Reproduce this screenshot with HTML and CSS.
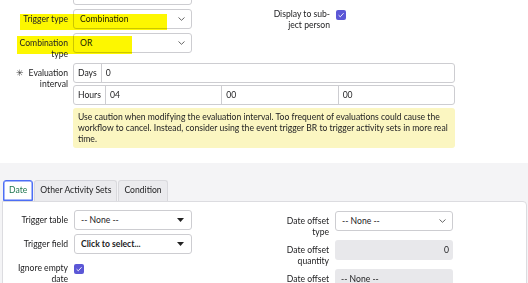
FILE: index.html
```html
<!DOCTYPE html>
<html lang="en">
<head>
  <meta charset="UTF-8">
  <title>Activity set trigger</title>
  <link rel="stylesheet" href="styles.css">
</head>
<body>
  <div class="top">
    <div class="cols">
      <div class="col">
        <div class="field">
          <span class="label"></span>
          <div class="input"></div>
        </div>
        <div class="field">
          <span class="mark mark-trigger"></span>
          <span class="label">Trigger type</span>
          <div class="select">Combination<svg class="chev" width="7" height="4" viewBox="0 0 7 4"><path d="M0.5 0.5 L3.5 3.3 L6.5 0.5" fill="none" stroke="#555" stroke-width="0.9"/></svg></div>
        </div>
        <div class="field">
          <span class="mark mark-combo"></span>
          <span class="label">Combination<br>type</span>
          <div class="select">OR<svg class="chev" width="7" height="4" viewBox="0 0 7 4"><path d="M0.5 0.5 L3.5 3.3 L6.5 0.5" fill="none" stroke="#555" stroke-width="0.9"/></svg></div>
        </div>
      </div>
      <div class="col col-right">
        <div class="field check-row">
          <span class="label">Display to sub-<br>ject person</span>
          <span class="checkbox"><svg width="10" height="10" viewBox="0 0 10 10"><path d="M2.6 5.2 L4.3 6.8 L7.6 3.2" fill="none" stroke="#fff" stroke-width="0.9"/></svg></span>
        </div>
      </div>
    </div>

    <div class="field wide">
      <span class="label"><span class="req">✳</span> Evaluation<br>interval</span>
      <div class="interval">
        <div class="group">
          <span class="addon">Days</span>
          <span class="cell">0</span>
        </div>
        <div class="group">
          <span class="addon">Hours</span>
          <span class="cell">04</span>
          <span class="cell">00</span>
          <span class="cell">00</span>
        </div>
        <div class="note">Use caution when modifying the evaluation interval. Too frequent of evaluations could cause the workflow to cancel. Instead, consider using the event trigger BR to trigger activity sets in more real time.</div>
      </div>
    </div>
  </div>

  <div class="band">
    <div class="tabs">
      <span class="tab active">Date</span>
      <span class="tab">Other Activity Sets</span>
      <span class="tab">Condition</span>
    </div>
    <div class="panel">
      <div class="cols">
        <div class="col">
          <div class="field">
            <span class="label">Trigger table</span>
            <div class="select">-- None --<svg class="tri" width="7" height="4" viewBox="0 0 7 4"><path d="M0 0 H7 L3.5 4 Z" fill="#222"/></svg></div>
          </div>
          <div class="field">
            <span class="label">Trigger field</span>
            <div class="select bold">Click to select...<svg class="tri" width="7" height="4" viewBox="0 0 7 4"><path d="M0 0 H7 L3.5 4 Z" fill="#222"/></svg></div>
          </div>
          <div class="field check-row">
            <span class="label">Ignore empty<br>date</span>
            <span class="checkbox"><svg width="10" height="10" viewBox="0 0 10 10"><path d="M2.6 5.2 L4.3 6.8 L7.6 3.2" fill="none" stroke="#fff" stroke-width="0.9"/></svg></span>
          </div>
        </div>
        <div class="col">
          <div class="field">
            <span class="label">Date offset<br>type</span>
            <div class="select">-- None --<svg class="chev" width="7" height="4" viewBox="0 0 7 4"><path d="M0.5 0.5 L3.5 3.3 L6.5 0.5" fill="none" stroke="#555" stroke-width="0.9"/></svg></div>
          </div>
          <div class="field">
            <span class="label">Date offset<br>quantity</span>
            <div class="readonly num">0</div>
          </div>
          <div class="field">
            <span class="label">Date offset</span>
            <div class="readonly">-- None --</div>
          </div>
        </div>
      </div>
    </div>
  </div>
</body>
</html>
```

FILE: styles.css
```css
body {
  margin: 0;
  font-family: "Lato", "Liberation Sans", sans-serif;
  font-size: 8.6px;
  line-height: 11px;
  color: #222224;
  background: #fff;
  overflow: hidden;
}

.top {
  margin-top: -15px;
  padding-bottom: 15px;
}

.cols {
  display: grid;
  grid-template-columns: 262px 1fr;
}

.col {
  display: flex;
  flex-direction: column;
  gap: 4px;
}

.col-right {
  padding-top: 19px;
}

.field {
  position: relative;
  display: grid;
  grid-template-columns: 68px 119px;
  column-gap: 5px;
  align-items: start;
}

.col-right .field,
.panel .col + .col .field {
  column-gap: 6px;
}

.label {
  position: relative;
  text-align: right;
  padding-top: 5px;
  min-height: 15px;
}

.check-row {
  padding-top: 5px;
}

.check-row .label {
  padding-top: 0;
}

/* marker highlight drawn over the form */
.mark {
  position: absolute;
  background: #fdf700;
  mix-blend-mode: multiply;
}
.mark-trigger {
  left: 20px;
  top: 5px;
  width: 147px;
  height: 16px;
}
.mark-combo {
  left: 17px;
  top: 3px;
  width: 115px;
  height: 18px;
}

.input,
.select {
  height: 20px;
  box-sizing: border-box;
  border: 1px solid #cdcdd1;
  border-radius: 3px;
  background: #fff;
}

.select {
  display: flex;
  align-items: center;
  justify-content: space-between;
  padding: 0 6px 0 6px;
}

.select.bold {
  font-weight: bold;
}

.tri {
  margin-right: 1px;
}

.checkbox {
  display: block;
  width: 10px;
  height: 10px;
  margin-top: 1px;
  background: #5b57d6;
  border-radius: 2px;
}
.checkbox svg {
  display: block;
}

.wide {
  margin-top: 3px;
  grid-template-columns: 68px 382px;
}

.req {
  color: #444;
  margin-right: 2px;
}

.interval {
  display: flex;
  flex-direction: column;
  gap: 2px;
}

.group {
  display: flex;
  height: 20px;
  box-sizing: border-box;
  border: 1px solid #cdcdd1;
  border-radius: 3px;
}

.addon {
  padding: 0 4px;
  border-right: 1px solid #cdcdd1;
  line-height: 18px;
}

.cell {
  flex: 1;
  padding: 0 4px;
  line-height: 18px;
}
.cell + .cell {
  border-left: 1px solid #cdcdd1;
}

.note {
  margin-top: 1px;
  padding: 4px 5px 3px;
  background: #fbf6c1;
  border-radius: 3px;
}

.band {
  background: #f4f4f6;
  padding: 17px 1px 0 2px;
}

.tabs {
  display: flex;
  gap: 1px;
  padding-left: 1px;
}

.tab {
  height: 21px;
  box-sizing: border-box;
  padding: 0 5px;
  line-height: 19px;
  background: #ebebee;
  border: 1px solid #d9d9dd;
  border-bottom: none;
  border-radius: 3px 3px 0 0;
}

.tab.active {
  background: #fff;
  color: #1f7650;
  border: 1px solid #4d6ef5;
  box-shadow: inset 0 0 0 0.5px #4d6ef5;
}

.panel {
  background: #fff;
  border: 1px solid #dcdce0;
  border-radius: 0 4px 0 0;
  padding-top: 8px;
  height: 120px;
}

.panel .cols {
  grid-template-columns: 259px 1fr;
}

.panel .col:first-child .field {
  grid-template-columns: 65px 118px;
  column-gap: 6px;
}

.panel .col + .col {
  padding-top: 1px;
  gap: 2px;
}

.panel .col + .col .field {
  grid-template-columns: 67px 118px;
}

.readonly {
  height: 20px;
  box-sizing: border-box;
  background: #e8e8eb;
  border-radius: 3px;
  padding: 0 6px;
  line-height: 20px;
}

.readonly.num {
  text-align: right;
  padding-right: 4px;
}
```
